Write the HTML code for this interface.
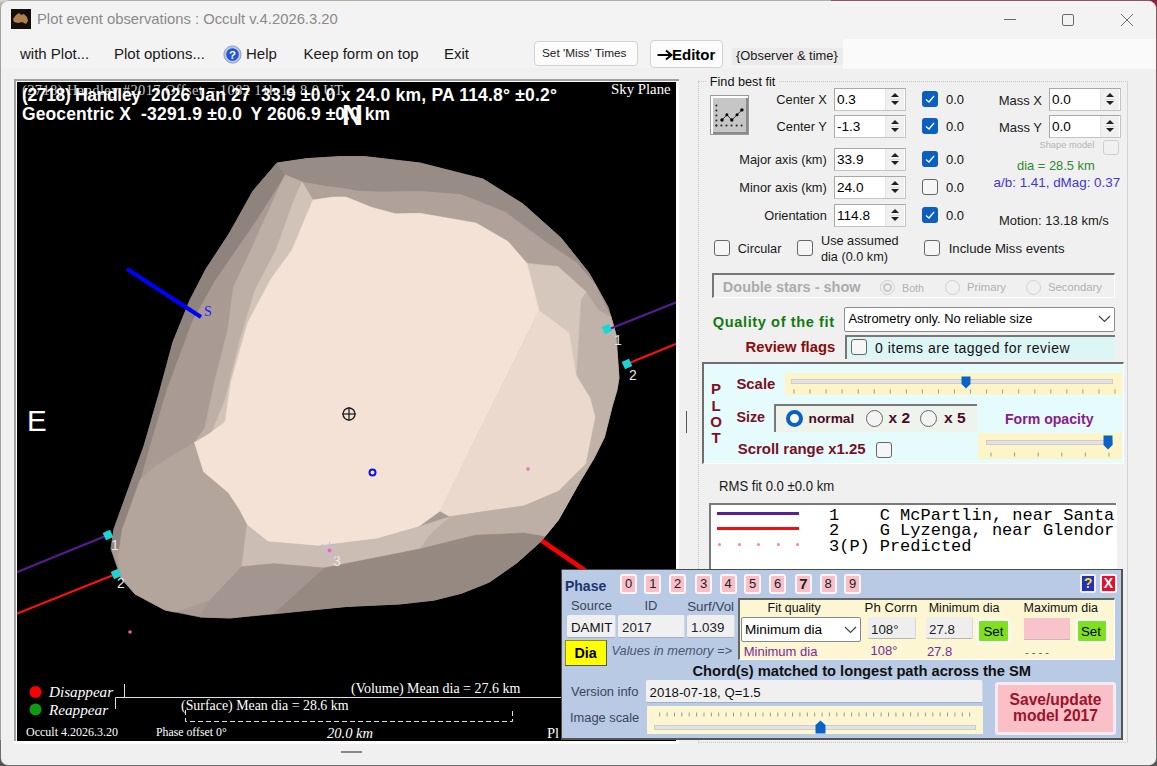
<!DOCTYPE html><html><head><meta charset="utf-8"><style>
*{box-sizing:border-box;margin:0;padding:0}
html,body{width:1157px;height:766px;overflow:hidden;background:#bcb6b0;font-family:"Liberation Sans",sans-serif;}
.a{position:absolute;white-space:nowrap;line-height:1}
#win{position:absolute;left:1px;top:1px;width:1155px;height:764px;background:#f0f0f0;border-radius:8px 8px 7px 7px;overflow:hidden;box-shadow:0 0 0 0.5px #888}
.inp{position:absolute;background:#fff;border:1px solid #c4c4c4;border-top-color:#a8a8a8;border-left-color:#a8a8a8}
.cb{position:absolute;width:16px;height:16px;border:1px solid #666;border-radius:3px;background:#f6f6f6}
.cbon{position:absolute;width:16px;height:16px;border-radius:3px;background:#0b5fc1}
.rad{position:absolute;width:16px;height:16px;border:1px solid #666;border-radius:50%;background:#f4f4f4}
.btn{position:absolute;background:#fcfcfc;border:1px solid #d2d2d2;border-radius:4px}
.pb{position:absolute;top:574px;width:17px;height:20px;background:#f9bfc9;border:2px solid #fdf4f6;border-radius:3px;font-size:13px;line-height:15px;text-align:center;color:#222}
.fld{position:absolute;background:#f0f0f0;border-bottom:1px solid #9fb0c8;border-right:1px solid #d0d8e4;border-radius:2px}
</style></head><body><div style="position:absolute;left:831px;top:0;width:326px;height:766px;background:#8a2444"></div><div style="position:absolute;left:0;top:0;width:831px;height:2px;background:#d8d0c8"></div><div style="position:absolute;left:0;top:740px;width:1157px;height:26px;background:#555"></div><div id="win"><div style="position:absolute;left:-1px;top:-1px;width:1157px;height:766px">
<div class="a" style="left:0;top:0;width:1156px;height:39px;background:#f3f3f3"></div>
<div class="a" style="left:0;top:39px;width:1156px;height:29px;background:#f3f3f3"></div>
<div class="a" style="left:843px;top:39px;width:313px;height:30px;background:#fafafa"></div>
<svg class="a" style="left:11px;top:9px" width="20" height="20"><rect width="20" height="20" fill="#140f0a"/><path d="M2,10 L5,6 L8,4 L10,6 L13,5 L16,8 L17,12 L15,15 L11,13 L7,14 L3,13 Z" fill="#b08050"/></svg>
<div class="a" style="left:37px;top:12.3px;font-size:14.8px;color:#8a8a8a">Plot event observations : Occult v.4.2026.3.20</div>
<div class="a" style="left:1004px;top:19px;width:12px;height:1px;background:#6a6a6a"></div>
<div class="a" style="left:1062px;top:14px;width:12px;height:12px;border:1px solid #6a6a6a;border-radius:2px"></div>
<svg class="a" style="left:1120px;top:13px" width="14" height="14"><path d="M1,1 L13,13 M13,1 L1,13" stroke="#606060" stroke-width="0.9"/></svg>
<div class="a" style="left:20px;top:46.20px;font-size:15px;color:#1a1a1a;font-family:'Liberation Sans',sans-serif;font-weight:normal;font-style:normal;">with Plot...</div>
<div class="a" style="left:114px;top:46.20px;font-size:15px;color:#1a1a1a;font-family:'Liberation Sans',sans-serif;font-weight:normal;font-style:normal;">Plot options...</div>
<svg class="a" style="left:223px;top:45px" width="19" height="19"><circle cx="9.5" cy="9.5" r="8.6" fill="#b8c6e0" stroke="#8a9cc4" stroke-width="1"/><circle cx="9.5" cy="9.5" r="6.3" fill="#1f55d6"/><text x="9.5" y="14" text-anchor="middle" font-family="Liberation Sans" font-weight="bold" font-size="11.5" fill="#fff">?</text></svg>
<div class="a" style="left:246px;top:46.20px;font-size:15px;color:#1a1a1a;font-family:'Liberation Sans',sans-serif;font-weight:normal;font-style:normal;">Help</div>
<div class="a" style="left:303.5px;top:46.20px;font-size:15px;color:#1a1a1a;font-family:'Liberation Sans',sans-serif;font-weight:normal;font-style:normal;">Keep form on top</div>
<div class="a" style="left:444px;top:46.20px;font-size:15px;color:#1a1a1a;font-family:'Liberation Sans',sans-serif;font-weight:normal;font-style:normal;">Exit</div>
<div class="btn" style="left:534px;top:41px;width:104px;height:25px"></div>
<div class="a" style="left:542px;top:48.01px;font-size:11.8px;color:#1a1a1a;font-family:'Liberation Sans',sans-serif;font-weight:normal;font-style:normal;">Set 'Miss' Times</div>
<div class="btn" style="left:650px;top:40px;width:73px;height:28px"></div>
<svg class="a" style="left:657px;top:49px" width="16" height="12"><path d="M0.5,6 H13" stroke="#000" stroke-width="2"/><path d="M9,1.5 L14.5,6 L9,10.5" stroke="#000" stroke-width="2" fill="none"/></svg>
<div class="a" style="left:672px;top:47.10px;font-size:15px;color:#000;font-family:'Liberation Sans',sans-serif;font-weight:bold;font-style:normal;">Editor</div>
<div class="a" style="left:732px;top:48px;width:111px;height:17px;background:#ebebeb"></div>
<div class="a" style="left:736px;top:49.58px;font-size:12.9px;color:#1a1a1a;font-family:'Liberation Sans',sans-serif;font-weight:normal;font-style:normal;">{Observer &amp; time}</div>
<div class="a" style="left:14px;top:79px;width:665px;height:662px;background:#fff;border-top:2px solid #a0a0a0;border-left:2px solid #a0a0a0"></div>
<div class="a" style="left:14px;top:741px;width:665px;height:3px;background:#fff"></div>
<div class="a" style="left:17px;top:82px;width:659px;height:659px;background:#000;overflow:hidden">
<svg width="659" height="659" viewBox="17 82 659 659" style="position:absolute;left:0;top:0" font-family="Liberation Sans">
<polygon points="277,163 307,158.6 341,156.5 364,156.5 420,163 483,179 523,204 561,238 589,273 608,307 616,335 619,378 617,390 612.3,406 604.4,437.4 594,458.3 578.3,484.4 558.3,520 541.7,540.7 516.8,562.9 489.2,582.2 461.5,593.3 433.8,600.2 400,604 347.5,606.4 283,613 230,618 200,617 165,610 135,594 121,578 111,549 114,529 131,482 144,446 159,394 173,342 190,300 206,269 229,234 253,191" fill="#a99b94" stroke="#a99b94" stroke-width="0.6" stroke-linejoin="round"/>
<polygon points="277,163 285,175 253,225 215,280 192,321 167,388 152.5,436 140,480 126,530 118,550 111,549 114,529 131,482 144,446 159,394 173,342 190,300 206,269 229,234 253,191" fill="#8f837d" stroke="#8f837d" stroke-width="0.6" stroke-linejoin="round"/>
<polygon points="277,163 307,158.6 341,156.5 364,156.5 420,163 483,179 523,204 561,238 589,273 608,307 616,335 611,317 595.5,285 577,263 545,241.5 505,212 461,194.5 420,191.3 380,192 357,191 341,188 327,186.5 302,182 285,175" fill="#988c86" stroke="#988c86" stroke-width="0.6" stroke-linejoin="round"/>
<polygon points="285,175 302,182 327,186.5 341,188 357,191 380,192 420,191.3 461,194.5 505,212 545,241.5 577,263 595.5,285 611,317 598.7,310.5 586,291.7 558,266.6 527,263.4 508,241.5 476,223 420,213.3 395.5,213.8 372,207.5 346,197 333,197 313,200 302,182" fill="#b0a29a" stroke="#b0a29a" stroke-width="0.6" stroke-linejoin="round"/>
<polygon points="285,175 302,182 313,200 292,250 271,279 248,322 231,382 225,422 209,434 194,443 204.8,428 215,380 227.8,330 233.6,287 251,250 262,225" fill="#bdafa6" stroke="#bdafa6" stroke-width="0.6" stroke-linejoin="round"/>
<polygon points="302,182 313,200 292,250 271,279 248,322 231,382 225,422 209,434 194,443 212,432 225,400 240,340 255,290 276,250 294,200" fill="#d2c3b9" stroke="#d2c3b9" stroke-width="0.6" stroke-linejoin="round"/>
<polygon points="611,317 616,335 619,378 617,390 612.3,406 604.4,437.4 594,458.3 578.3,484.4 557,492 585.5,464 595,417 590,398 576,375 580.8,299.8 586,291.7 598.7,310.5" fill="#c0b2a9" stroke="#c0b2a9" stroke-width="0.6" stroke-linejoin="round"/>
<polygon points="527,263.4 558,266.6 586,291.7 580.8,299.8 576,375 569,332.7 539,310.5" fill="#d6c7bd" stroke="#d6c7bd" stroke-width="0.6" stroke-linejoin="round"/>
<polygon points="313,200 333,197 346,197 372,207.5 395.5,213.8 420,213.3 476,223 508,241.5 527,263.4 539,310.5 440,511 418,527 377,538.8 318,546 268,541.7 247,525 238.8,509.4 228,493 203,471.6 194,443 209,434 225,422 231,382 248,322 271,279 292,250" fill="#f5e2d6" stroke="#f5e2d6" stroke-width="0.6" stroke-linejoin="round"/>
<polygon points="539,310.5 569,332.7 576,375 590,398 595,417 585.5,464 557,492 524,506 488.6,511 450,516.7 440,511" fill="#ecd9cd" stroke="#ecd9cd" stroke-width="0.6" stroke-linejoin="round"/>
<polygon points="157,465 194,443 203,472 228,493 238.8,509.4 247,525 241.8,566.7 210,600 175,612 165,610 135,594 121,578 118,560 122,530 140,480" fill="#b3a59c" stroke="#b3a59c" stroke-width="0.6" stroke-linejoin="round"/>
<polygon points="247,525 268,541.7 318,546 377,538.8 418,527 450,516.7 488.6,511 524,506 557,492 578.3,484.4 558.3,520 544.5,536.6 523.7,533.1 475.3,535.2 420,549 324,568 274,563.7 241.8,566.7" fill="#cbbdb3" stroke="#cbbdb3" stroke-width="0.6" stroke-linejoin="round"/>
<polygon points="450,516.7 488.6,511 524,506 557,492 578.3,484.4 558.3,520 544.5,536.6 523.7,533.1 475.3,535.2 420,549 430,535" fill="#bdafa6" stroke="#bdafa6" stroke-width="0.6" stroke-linejoin="round"/>
<polygon points="324,568 420,549 475.3,535.2 523.7,533.1 544.5,536.6 541.7,540.7 516.8,562.9 489.2,582.2 461.5,593.3 433.8,600.2 400,604 347.5,606.4 274,613" fill="#968981" stroke="#968981" stroke-width="0.6" stroke-linejoin="round"/>
<polygon points="241.8,566.7 274,563.7 324,568 274,613 230,618 200,617 210,600" fill="#a39690" stroke="#a39690" stroke-width="0.6" stroke-linejoin="round"/>
<line x1="127" y1="269" x2="201" y2="317" stroke="#0000ff" stroke-width="4"/>
<text x="204" y="316" font-family="Liberation Serif" font-size="14" fill="#2020ff">S</text>
<line x1="607" y1="330" x2="677" y2="302" stroke="#5a1a9a" stroke-width="2"/>
<line x1="627" y1="364" x2="677" y2="343.5" stroke="#ff1010" stroke-width="2"/>
<line x1="16" y1="572.5" x2="108" y2="535" stroke="#5a1a9a" stroke-width="2"/>
<line x1="16" y1="614" x2="116" y2="574" stroke="#ff1010" stroke-width="2"/>
<line x1="541.7" y1="540.7" x2="600" y2="580.7" stroke="#ff0000" stroke-width="4.5"/>
<rect x="603" y="325" width="8" height="8" fill="#19d5d5" transform="rotate(-25 607 329)"/>
<rect x="623" y="360" width="8" height="8" fill="#19d5d5" transform="rotate(-25 627 364)"/>
<rect x="104" y="531" width="8" height="8" fill="#19d5d5" transform="rotate(-25 108 535)"/>
<rect x="112" y="570" width="8" height="8" fill="#19d5d5" transform="rotate(-25 116 574)"/>
<text x="614" y="345" font-size="14" fill="#e8e8e8">1</text>
<text x="629" y="380" font-size="14" fill="#e8e8e8">2</text>
<text x="111" y="550" font-size="14" fill="#e8e8e8">1</text>
<text x="117" y="588" font-size="14" fill="#e8e8e8">2</text>
<text x="333" y="566" font-size="14" fill="#e8e8e8">3</text>
<circle cx="349" cy="414" r="6" fill="none" stroke="#222" stroke-width="1.4"/><line x1="342" y1="414" x2="356" y2="414" stroke="#222" stroke-width="1.3"/><line x1="349" y1="407" x2="349" y2="421" stroke="#222" stroke-width="1.3"/>
<circle cx="372.5" cy="472.5" r="3" fill="none" stroke="#1010e0" stroke-width="2"/>
<g stroke="#c8b8e8" stroke-width="1"><line x1="322" y1="544" x2="337" y2="557"/><line x1="337" y1="544" x2="322" y2="557"/><line x1="329.5" y1="542" x2="329.5" y2="559"/></g><circle cx="329.5" cy="550.5" r="2" fill="#f060c0"/>
<circle cx="528" cy="469" r="1.8" fill="#f070c0"/><circle cx="130" cy="632" r="1.8" fill="#e060a0"/>
<text x="27" y="431" font-size="29.5" fill="#fff">E</text>
<text x="22" y="95" font-family="Liberation Serif" font-size="14.5" fill="#c4c4c4" textLength="321" lengthAdjust="spacing">(2718) Handley #2017  Offset = 1082   11h 14 8.0 UT</text>
<g font-weight="bold" font-size="17.5" fill="#fff">
<text x="22" y="100.7" textLength="119" lengthAdjust="spacing">(2718) Handley</text><text x="151" y="100.7" textLength="99.6" lengthAdjust="spacing">2026 Jan 27</text><text x="261" y="100.7" textLength="296" lengthAdjust="spacing">33.9 ±0.0 x 24.0 km, PA 114.8° ±0.2°</text>
<text x="22" y="120" textLength="109" lengthAdjust="spacing">Geocentric X</text><text x="141" y="120" textLength="101" lengthAdjust="spacing">-3291.9 ±0.0</text><text x="250.6" y="120" textLength="139.4" lengthAdjust="spacing">Y 2606.9 ±0.0 km</text>
</g>
<text x="342" y="125" font-size="29" font-weight="bold" fill="#fff">N</text>
<text x="611" y="93.7" font-family="Liberation Serif" font-size="14.8" fill="#fff">Sky Plane</text>
<circle cx="35.5" cy="692" r="6" fill="#ff0000"/><circle cx="35.5" cy="709.5" r="6" fill="#109a10"/>
<g font-family="Liberation Serif" fill="#fff">
<text x="49" y="697" font-size="15.2" font-style="italic">Disappear</text>
<text x="49" y="715" font-size="15.2" font-style="italic">Reappear</text>
<text x="26" y="736" font-size="12">Occult 4.2026.3.20</text>
<text x="351" y="693" font-size="14">(Volume) Mean dia = 27.6 km</text>
<text x="181" y="710" font-size="13.9">(Surface) Mean dia = 28.6 km</text>
<text x="156" y="736" font-size="11.8">Phase offset 0°</text>
<text x="327" y="738" font-size="14.5" font-style="italic">20.0 km</text>
<text x="547" y="738" font-size="14.5">Pl</text>
</g>
<g stroke="#e0e0e0" stroke-width="1" fill="none">
<path d="M124.5,684 V697.5 H676"/><path d="M115.5,709 V697.5 H125"/>
<path d="M185.5,710 V721.5 H512.5 V710" stroke-dasharray="5,3"/>
</g>
</svg></div>
<div class="a" style="left:686px;top:411px;width:1px;height:22px;background:#555"></div>
<div class="a" style="left:341px;top:751px;width:21px;height:2px;background:#888"></div>
<div class="a" style="left:698px;top:81px;width:430px;height:662px;border:1px dotted #c8c8c8"></div>
<div class="a" style="left:707px;top:74px;width:72px;height:14px;background:#f0f0f0"></div>
<div class="a" style="left:709.8px;top:75.55px;font-size:12.7px;color:#111;font-family:'Liberation Sans',sans-serif;font-weight:normal;font-style:normal;">Find best fit</div>
<div class="a" style="left:710px;top:95px;width:39px;height:40px;background:#c6c6c6;border:1px solid #9a9a9a;box-shadow:inset 2px 2px 0 #fff,inset -2px -2px 0 #8a8a8a"></div>
<svg class="a" style="left:0;top:0" width="1157" height="766"><g fill="#222"><circle cx="716.4" cy="105.6" r="1"/><circle cx="716.4" cy="110.6" r="1"/><circle cx="716.4" cy="115.6" r="1"/><circle cx="716.4" cy="120.6" r="1"/><circle cx="716.4" cy="125.6" r="1"/><circle cx="716.4" cy="125.6" r="1"/><circle cx="721.4" cy="125.6" r="1"/><circle cx="726.5" cy="125.6" r="1"/><circle cx="731.5" cy="125.6" r="1"/><circle cx="736.6" cy="125.6" r="1"/><circle cx="741.6" cy="125.6" r="1"/></g><path d="M722,120 L726.9,114.8 L731.8,120 L737,114.8 L741.9,109.9" stroke="#333" stroke-width="1" fill="none"/><g fill="#000"><circle cx="722" cy="120" r="1.7"/><circle cx="726.9" cy="114.8" r="1.5"/><circle cx="731.8" cy="120" r="1.7"/><circle cx="737" cy="114.8" r="1.5"/><circle cx="741.9" cy="109.9" r="1.7"/></g></svg>
<div class="inp" style="left:834px;top:88px;width:72px;height:23px"></div>
<div class="a" style="left:885px;top:89px;width:19px;height:21px;background:#f0f0f0;border-left:1px solid #e4e4e4"></div>
<svg class="a" style="left:889.5px;top:91px" width="10" height="17"><path d="M1,6 L5,2 L9,6 Z" fill="#222"/><path d="M1,10 L5,14 L9,10 Z" fill="#222"/><line x1="0" y1="8.5" x2="10" y2="8.5" stroke="#d8d8d8"/></svg>
<div class="a" style="left:837px;top:92.99px;font-size:13.6px;color:#000;font-family:'Liberation Sans',sans-serif;font-weight:normal;font-style:normal;">0.3</div>
<div class="a" style="left:776.315625px;top:93.66px;font-size:12.8px;color:#1a1a1a;font-family:'Liberation Sans',sans-serif;font-weight:normal;font-style:normal;">Center X</div>
<div class="cbon" style="left:922px;top:91px"></div><svg class="a" style="left:922px;top:91px" width="16" height="16"><path d="M4,8.5 L7,11 L12,5" stroke="#fff" stroke-width="1.3" fill="none"/></svg>
<div class="a" style="left:946px;top:93.00px;font-size:13px;color:#111;font-family:'Liberation Sans',sans-serif;font-weight:normal;font-style:normal;">0.0</div>
<div class="inp" style="left:834px;top:115px;width:72px;height:23px"></div>
<div class="a" style="left:885px;top:116px;width:19px;height:21px;background:#f0f0f0;border-left:1px solid #e4e4e4"></div>
<svg class="a" style="left:889.5px;top:118px" width="10" height="17"><path d="M1,6 L5,2 L9,6 Z" fill="#222"/><path d="M1,10 L5,14 L9,10 Z" fill="#222"/><line x1="0" y1="8.5" x2="10" y2="8.5" stroke="#d8d8d8"/></svg>
<div class="a" style="left:837px;top:119.99px;font-size:13.6px;color:#000;font-family:'Liberation Sans',sans-serif;font-weight:normal;font-style:normal;">-1.3</div>
<div class="a" style="left:776.55px;top:120.66px;font-size:12.8px;color:#1a1a1a;font-family:'Liberation Sans',sans-serif;font-weight:normal;font-style:normal;">Center Y</div>
<div class="cbon" style="left:922px;top:118px"></div><svg class="a" style="left:922px;top:118px" width="16" height="16"><path d="M4,8.5 L7,11 L12,5" stroke="#fff" stroke-width="1.3" fill="none"/></svg>
<div class="a" style="left:946px;top:120.00px;font-size:13px;color:#111;font-family:'Liberation Sans',sans-serif;font-weight:normal;font-style:normal;">0.0</div>
<div class="inp" style="left:834px;top:148px;width:72px;height:23px"></div>
<div class="a" style="left:885px;top:149px;width:19px;height:21px;background:#f0f0f0;border-left:1px solid #e4e4e4"></div>
<svg class="a" style="left:889.5px;top:151px" width="10" height="17"><path d="M1,6 L5,2 L9,6 Z" fill="#222"/><path d="M1,10 L5,14 L9,10 Z" fill="#222"/><line x1="0" y1="8.5" x2="10" y2="8.5" stroke="#d8d8d8"/></svg>
<div class="a" style="left:837px;top:152.99px;font-size:13.6px;color:#000;font-family:'Liberation Sans',sans-serif;font-weight:normal;font-style:normal;">33.9</div>
<div class="a" style="left:739.33125px;top:153.66px;font-size:12.8px;color:#1a1a1a;font-family:'Liberation Sans',sans-serif;font-weight:normal;font-style:normal;">Major axis (km)</div>
<div class="cbon" style="left:922px;top:151px"></div><svg class="a" style="left:922px;top:151px" width="16" height="16"><path d="M4,8.5 L7,11 L12,5" stroke="#fff" stroke-width="1.3" fill="none"/></svg>
<div class="a" style="left:946px;top:153.00px;font-size:13px;color:#111;font-family:'Liberation Sans',sans-serif;font-weight:normal;font-style:normal;">0.0</div>
<div class="inp" style="left:834px;top:176px;width:72px;height:23px"></div>
<div class="a" style="left:885px;top:177px;width:19px;height:21px;background:#f0f0f0;border-left:1px solid #e4e4e4"></div>
<svg class="a" style="left:889.5px;top:179px" width="10" height="17"><path d="M1,6 L5,2 L9,6 Z" fill="#222"/><path d="M1,10 L5,14 L9,10 Z" fill="#222"/><line x1="0" y1="8.5" x2="10" y2="8.5" stroke="#d8d8d8"/></svg>
<div class="a" style="left:837px;top:180.99px;font-size:13.6px;color:#000;font-family:'Liberation Sans',sans-serif;font-weight:normal;font-style:normal;">24.0</div>
<div class="a" style="left:739.33125px;top:181.66px;font-size:12.8px;color:#1a1a1a;font-family:'Liberation Sans',sans-serif;font-weight:normal;font-style:normal;">Minor axis (km)</div>
<div class="cb" style="left:922px;top:179px"></div>
<div class="a" style="left:946px;top:181.00px;font-size:13px;color:#111;font-family:'Liberation Sans',sans-serif;font-weight:normal;font-style:normal;">0.0</div>
<div class="inp" style="left:834px;top:204px;width:72px;height:23px"></div>
<div class="a" style="left:885px;top:205px;width:19px;height:21px;background:#f0f0f0;border-left:1px solid #e4e4e4"></div>
<svg class="a" style="left:889.5px;top:207px" width="10" height="17"><path d="M1,6 L5,2 L9,6 Z" fill="#222"/><path d="M1,10 L5,14 L9,10 Z" fill="#222"/><line x1="0" y1="8.5" x2="10" y2="8.5" stroke="#d8d8d8"/></svg>
<div class="a" style="left:837px;top:208.99px;font-size:13.6px;color:#000;font-family:'Liberation Sans',sans-serif;font-weight:normal;font-style:normal;">114.8</div>
<div class="a" style="left:764.221875px;top:209.66px;font-size:12.8px;color:#1a1a1a;font-family:'Liberation Sans',sans-serif;font-weight:normal;font-style:normal;">Orientation</div>
<div class="cbon" style="left:922px;top:207px"></div><svg class="a" style="left:922px;top:207px" width="16" height="16"><path d="M4,8.5 L7,11 L12,5" stroke="#fff" stroke-width="1.3" fill="none"/></svg>
<div class="a" style="left:946px;top:209.00px;font-size:13px;color:#111;font-family:'Liberation Sans',sans-serif;font-weight:normal;font-style:normal;">0.0</div>
<div class="inp" style="left:1049px;top:88px;width:72px;height:23px"></div>
<div class="a" style="left:1100px;top:89px;width:19px;height:21px;background:#f0f0f0;border-left:1px solid #e4e4e4"></div>
<svg class="a" style="left:1104.5px;top:91px" width="10" height="17"><path d="M1,6 L5,2 L9,6 Z" fill="#222"/><path d="M1,10 L5,14 L9,10 Z" fill="#222"/><line x1="0" y1="8.5" x2="10" y2="8.5" stroke="#d8d8d8"/></svg>
<div class="a" style="left:1052px;top:92.99px;font-size:13.6px;color:#000;font-family:'Liberation Sans',sans-serif;font-weight:normal;font-style:normal;">0.0</div>
<div class="inp" style="left:1049px;top:115px;width:72px;height:23px"></div>
<div class="a" style="left:1100px;top:116px;width:19px;height:21px;background:#f0f0f0;border-left:1px solid #e4e4e4"></div>
<svg class="a" style="left:1104.5px;top:118px" width="10" height="17"><path d="M1,6 L5,2 L9,6 Z" fill="#222"/><path d="M1,10 L5,14 L9,10 Z" fill="#222"/><line x1="0" y1="8.5" x2="10" y2="8.5" stroke="#d8d8d8"/></svg>
<div class="a" style="left:1052px;top:119.99px;font-size:13.6px;color:#000;font-family:'Liberation Sans',sans-serif;font-weight:normal;font-style:normal;">0.0</div>
<div class="a" style="left:998.65625px;top:93.50px;font-size:13px;color:#1a1a1a;font-family:'Liberation Sans',sans-serif;font-weight:normal;font-style:normal;">Mass X</div>
<div class="a" style="left:998.890625px;top:120.50px;font-size:13px;color:#1a1a1a;font-family:'Liberation Sans',sans-serif;font-weight:normal;font-style:normal;">Mass Y</div>
<div class="a" style="left:1039.5px;top:141.13px;font-size:9.3px;color:#b4b4b4;font-family:'Liberation Sans',sans-serif;font-weight:normal;font-style:normal;">Shape model</div>
<div class="a" style="left:1103px;top:140px;width:16px;height:15px;border:1px solid #cfcfcf;border-radius:3px"></div>
<div class="a" style="left:1017px;top:159.58px;font-size:12.9px;color:#2d8a2d;font-family:'Liberation Sans',sans-serif;font-weight:normal;font-style:normal;">dia = 28.5 km</div>
<div class="a" style="left:993.6px;top:176.16px;font-size:13.4px;color:#4236d6;font-family:'Liberation Sans',sans-serif;font-weight:normal;font-style:normal;">a/b: 1.41, dMag: 0.37</div>
<div class="a" style="left:999px;top:213.50px;font-size:13px;color:#1a1a1a;font-family:'Liberation Sans',sans-serif;font-weight:normal;font-style:normal;">Motion: 13.18 km/s</div>
<div class="cb" style="left:714px;top:240px"></div>
<div class="a" style="left:737.7px;top:242.75px;font-size:12.7px;color:#1a1a1a;font-family:'Liberation Sans',sans-serif;font-weight:normal;font-style:normal;">Circular</div>
<div class="cb" style="left:797px;top:240px"></div>
<div class="a" style="left:821px;top:234.75px;font-size:12.7px;color:#1a1a1a;font-family:'Liberation Sans',sans-serif;font-weight:normal;font-style:normal;">Use assumed</div>
<div class="a" style="left:821px;top:250.75px;font-size:12.7px;color:#1a1a1a;font-family:'Liberation Sans',sans-serif;font-weight:normal;font-style:normal;">dia (0.0 km)</div>
<div class="cb" style="left:924px;top:240px"></div>
<div class="a" style="left:948.7px;top:242.33px;font-size:13.2px;color:#1a1a1a;font-family:'Liberation Sans',sans-serif;font-weight:normal;font-style:normal;">Include Miss events</div>
<div class="a" style="left:712px;top:273px;width:403px;height:25px;border-top:2px solid #777;border-left:2px solid #777;border-right:1px solid #fff;border-bottom:1px solid #fff"></div>
<div class="a" style="left:722.8px;top:279.73px;font-size:14.5px;color:#ababab;font-family:'Liberation Sans',sans-serif;font-weight:bold;font-style:normal;">Double stars - show</div>
<div class="rad" style="left:880px;top:280px;border-color:#cfcfcf;background:#f0f0f0;width:15px;height:15px"></div>
<div class="a" style="left:902px;top:282.94px;font-size:10.7px;color:#b0b0b0;font-family:'Liberation Sans',sans-serif;font-weight:normal;font-style:normal;">Both</div>
<div class="rad" style="left:945px;top:280px;border-color:#cfcfcf;background:#f0f0f0;width:15px;height:15px"></div>
<div class="a" style="left:967px;top:282.43px;font-size:11.3px;color:#b0b0b0;font-family:'Liberation Sans',sans-serif;font-weight:normal;font-style:normal;">Primary</div>
<div class="rad" style="left:1026px;top:280px;border-color:#cfcfcf;background:#f0f0f0;width:15px;height:15px"></div>
<div class="a" style="left:1048px;top:282.43px;font-size:11.3px;color:#b0b0b0;font-family:'Liberation Sans',sans-serif;font-weight:normal;font-style:normal;">Secondary</div>
<div class="a" style="left:883px;top:283px;width:9px;height:9px;border-radius:50%;background:#c8c8c8"></div><div class="a" style="left:885px;top:285px;width:5px;height:5px;border-radius:50%;background:#f0f0f0"></div>
<div class="a" style="left:712.8px;top:315.14px;font-size:14.6px;color:#127a12;font-family:'Liberation Sans',sans-serif;font-weight:bold;font-style:normal;letter-spacing:0.6px">Quality of the fit</div>
<div class="a" style="left:844px;top:307px;width:271px;height:25px;background:#fff;border:1px solid #8c8c8c;border-radius:2px"></div>
<div class="a" style="left:848.5px;top:313.38px;font-size:12.9px;color:#000;font-family:'Liberation Sans',sans-serif;font-weight:normal;font-style:normal;">Astrometry only. No reliable size</div>
<svg class="a" style="left:1098px;top:315px" width="13" height="8"><path d="M1,1 L6.5,6.5 L12,1" stroke="#444" stroke-width="1.2" fill="none"/></svg>
<div class="a" style="left:745.54375px;top:339.97px;font-size:14.8px;color:#8a0a0a;font-family:'Liberation Sans',sans-serif;font-weight:bold;font-style:normal;">Review flags</div>
<div class="a" style="left:845px;top:335px;width:270px;height:24px;background:#dcf5f5;border-top:2px solid #777;border-left:2px solid #777"></div>
<div class="cb" style="left:851px;top:339px"></div>
<div class="a" style="left:875px;top:340.65px;font-size:14px;color:#111;font-family:'Liberation Sans',sans-serif;font-weight:normal;font-style:normal;letter-spacing:0.5px">0 items are tagged for review</div>
<div class="a" style="left:702px;top:362px;width:422px;height:102px;background:#e6fbfb;border-top:2px solid #6e6e6e;border-left:2px solid #6e6e6e;border-right:1px solid #fff;border-bottom:1px solid #fff"></div>
<div class="a" style="left:706px;top:381px;width:20px;text-align:center;font-size:15px;font-weight:bold;color:#80102a">P</div>
<div class="a" style="left:706px;top:397.8px;width:20px;text-align:center;font-size:15px;font-weight:bold;color:#80102a">L</div>
<div class="a" style="left:706px;top:414.4px;width:20px;text-align:center;font-size:15px;font-weight:bold;color:#80102a">O</div>
<div class="a" style="left:706px;top:430px;width:20px;text-align:center;font-size:15px;font-weight:bold;color:#80102a">T</div>
<div class="a" style="left:736.4px;top:377.39px;font-size:14.9px;color:#7a0f25;font-family:'Liberation Sans',sans-serif;font-weight:bold;font-style:normal;">Scale</div>
<div class="a" style="left:785px;top:373px;width:337px;height:22px;background:#fdf4c8"></div>
<div class="a" style="left:791px;top:379px;width:322px;height:5px;background:#e2e2e2;border:1px solid #cdcdcd"></div>
<svg class="a" style="left:0;top:0" width="1157" height="766" ><g stroke="#999" stroke-width="1"><line x1="794.0" y1="389.5" x2="794.0" y2="393.5"/><line x1="810.0" y1="389.5" x2="810.0" y2="393.5"/><line x1="826.1" y1="389.5" x2="826.1" y2="393.5"/><line x1="842.1" y1="389.5" x2="842.1" y2="393.5"/><line x1="858.2" y1="389.5" x2="858.2" y2="393.5"/><line x1="874.2" y1="389.5" x2="874.2" y2="393.5"/><line x1="890.3" y1="389.5" x2="890.3" y2="393.5"/><line x1="906.4" y1="389.5" x2="906.4" y2="393.5"/><line x1="922.4" y1="389.5" x2="922.4" y2="393.5"/><line x1="938.5" y1="389.5" x2="938.5" y2="393.5"/><line x1="954.5" y1="389.5" x2="954.5" y2="393.5"/><line x1="970.5" y1="389.5" x2="970.5" y2="393.5"/><line x1="986.6" y1="389.5" x2="986.6" y2="393.5"/><line x1="1002.6" y1="389.5" x2="1002.6" y2="393.5"/><line x1="1018.7" y1="389.5" x2="1018.7" y2="393.5"/><line x1="1034.8" y1="389.5" x2="1034.8" y2="393.5"/><line x1="1050.8" y1="389.5" x2="1050.8" y2="393.5"/><line x1="1066.8" y1="389.5" x2="1066.8" y2="393.5"/><line x1="1082.9" y1="389.5" x2="1082.9" y2="393.5"/><line x1="1099.0" y1="389.5" x2="1099.0" y2="393.5"/><line x1="1115.0" y1="389.5" x2="1115.0" y2="393.5"/></g></svg>
<svg class="a" style="left:961px;top:376px" width="10" height="13"><path d="M0.5,0.5 H9.5 V8 L5,12.5 L0.5,8 Z" fill="#0a64c8"/></svg>
<div class="a" style="left:736.4px;top:409.90px;font-size:14.3px;color:#7a0f25;font-family:'Liberation Sans',sans-serif;font-weight:bold;font-style:normal;">Size</div>
<div class="a" style="left:774px;top:404px;width:203px;height:28px;background:#eef3ec;border-top:2px solid #777;border-left:2px solid #777"></div>
<div class="a" style="left:786px;top:410px;width:17px;height:17px;border-radius:50%;border:4.5px solid #0a62c2;background:#fff"></div>
<div class="a" style="left:808.6px;top:411.90px;font-size:13.7px;color:#4a0a28;font-family:'Liberation Sans',sans-serif;font-weight:bold;font-style:normal;">normal</div>
<div class="rad" style="left:866px;top:410px;width:17px;height:17px"></div>
<div class="a" style="left:888.5px;top:410.38px;font-size:15.5px;color:#4a0a28;font-family:'Liberation Sans',sans-serif;font-weight:bold;font-style:normal;">x 2</div>
<div class="rad" style="left:920px;top:410px;width:17px;height:17px"></div>
<div class="a" style="left:944px;top:410.38px;font-size:15.5px;color:#4a0a28;font-family:'Liberation Sans',sans-serif;font-weight:bold;font-style:normal;">x 5</div>
<div class="a" style="left:1005px;top:412.06px;font-size:14.1px;color:#8a1a8a;font-family:'Liberation Sans',sans-serif;font-weight:bold;font-style:normal;">Form opacity</div>
<div class="a" style="left:978px;top:433px;width:144px;height:26px;background:#fdf4c8"></div>
<div class="a" style="left:986px;top:440px;width:127px;height:5px;background:#e2e2e2;border:1px solid #cdcdcd"></div>
<svg class="a" style="left:0;top:0" width="1157" height="766"><g stroke="#999"><line x1="991.0" y1="452.5" x2="991.0" y2="456.5"/><line x1="1014.6" y1="452.5" x2="1014.6" y2="456.5"/><line x1="1038.2" y1="452.5" x2="1038.2" y2="456.5"/><line x1="1061.8" y1="452.5" x2="1061.8" y2="456.5"/><line x1="1085.4" y1="452.5" x2="1085.4" y2="456.5"/><line x1="1109.0" y1="452.5" x2="1109.0" y2="456.5"/></g></svg>
<svg class="a" style="left:1103px;top:435px" width="10" height="15"><path d="M0.5,0.5 H9.5 V10 L5,14.5 L0.5,10 Z" fill="#0a64c8"/></svg>
<div class="a" style="left:737.7px;top:442.34px;font-size:14.95px;color:#7a0f25;font-family:'Liberation Sans',sans-serif;font-weight:bold;font-style:normal;">Scroll range x1.25</div>
<div class="cb" style="left:876px;top:442px"></div>
<div class="a" style="left:718.5px;top:479.23px;font-size:14.5px;color:#1a1a1a;font-family:'Liberation Sans',sans-serif;font-weight:normal;font-style:normal;transform:scaleX(0.905);transform-origin:left">RMS fit 0.0 ±0.0 km</div>
<div class="a" style="left:709px;top:503px;width:408px;height:80px;background:#fff;border-top:2px solid #7a7a7a;border-left:2px solid #7a7a7a"></div>
<div class="a" style="left:717px;top:512px;width:82px;height:3px;background:#5a1e96"></div>
<div class="a" style="left:717px;top:527px;width:82px;height:3px;background:#ee1010"></div>
<div class="a" style="left:718.0px;top:542.5px;width:3px;height:3px;border-radius:50%;background:#f080c8"></div>
<div class="a" style="left:737.5px;top:542.5px;width:3px;height:3px;border-radius:50%;background:#f080c8"></div>
<div class="a" style="left:757.0px;top:542.5px;width:3px;height:3px;border-radius:50%;background:#f080c8"></div>
<div class="a" style="left:776.5px;top:542.5px;width:3px;height:3px;border-radius:50%;background:#f080c8"></div>
<div class="a" style="left:796.0px;top:542.5px;width:3px;height:3px;border-radius:50%;background:#f080c8"></div>
<div class="a" style="left:829px;top:507.37px;font-size:17px;color:#000;font-family:'Liberation Mono',monospace;font-weight:normal;font-style:normal;">1</div>
<div class="a" style="left:879.7px;top:507.37px;font-size:17px;color:#000;font-family:'Liberation Mono',monospace;font-weight:normal;font-style:normal;">C McPartlin, near Santa</div>
<div class="a" style="left:829px;top:522.47px;font-size:17px;color:#000;font-family:'Liberation Mono',monospace;font-weight:normal;font-style:normal;">2</div>
<div class="a" style="left:879.7px;top:522.47px;font-size:17px;color:#000;font-family:'Liberation Mono',monospace;font-weight:normal;font-style:normal;">G Lyzenga, near Glendor</div>
<div class="a" style="left:829px;top:537.57px;font-size:17px;color:#000;font-family:'Liberation Mono',monospace;font-weight:normal;font-style:normal;">3(P)</div>
<div class="a" style="left:879.7px;top:537.57px;font-size:17px;color:#000;font-family:'Liberation Mono',monospace;font-weight:normal;font-style:normal;">Predicted</div>
<div class="a" style="left:1116px;top:503px;width:1px;height:70px;background:#fff"></div>
<div class="a" style="left:1127px;top:81px;width:1px;height:662px;background:#d4d4d4"></div>
<div class="a" style="left:561px;top:569px;width:562px;height:171px;background:#b8cae4;border:1px solid #4a4a4a;border-right:2px solid #555;border-bottom:2px solid #555"></div>
<div class="a" style="left:564.9px;top:579.11px;font-size:14.05px;color:#1c3570;font-family:'Liberation Sans',sans-serif;font-weight:bold;font-style:normal;">Phase</div>
<div class="pb" style="left:620.0px;font-weight:normal;font-size:13px">0</div>
<div class="pb" style="left:644.4px;font-weight:normal;font-size:13px">1</div>
<div class="pb" style="left:669.0px;font-weight:normal;font-size:13px">2</div>
<div class="pb" style="left:695.0px;font-weight:normal;font-size:13px">3</div>
<div class="pb" style="left:719.6px;font-weight:normal;font-size:13px">4</div>
<div class="pb" style="left:744.0px;font-weight:normal;font-size:13px">5</div>
<div class="pb" style="left:769.0px;font-weight:normal;font-size:13px">6</div>
<div class="pb" style="left:794.8px;font-weight:bold;font-size:15px">7</div>
<div class="pb" style="left:819.5px;font-weight:normal;font-size:13px">8</div>
<div class="pb" style="left:844.0px;font-weight:normal;font-size:13px">9</div>
<div class="a" style="left:1080px;top:574px;width:16px;height:19px;background:#2030c0;border:2px solid #eef;border-radius:2px;color:#ffe000;font-weight:bold;font-size:14px;line-height:15px;text-align:center">?</div>
<div class="a" style="left:1100px;top:574px;width:17px;height:19px;background:#e01030;border:2px solid #fee;border-radius:2px;color:#fff;font-weight:bold;font-size:14px;line-height:15px;text-align:center">X</div>
<div class="a" style="left:571px;top:600.08px;font-size:12.9px;color:#3a4658;font-family:'Liberation Sans',sans-serif;font-weight:normal;font-style:normal;">Source</div>
<div class="a" style="left:644.4px;top:600.08px;font-size:12.9px;color:#3a4658;font-family:'Liberation Sans',sans-serif;font-weight:normal;font-style:normal;">ID</div>
<div class="a" style="left:687.2px;top:599.66px;font-size:13.4px;color:#3a4658;font-family:'Liberation Sans',sans-serif;font-weight:normal;font-style:normal;">Surf/Vol</div>
<div class="fld" style="left:567px;top:615px;width:49px;height:23px"></div>
<div class="fld" style="left:618px;top:615px;width:67px;height:23px"></div>
<div class="fld" style="left:687px;top:615px;width:48px;height:23px"></div>
<div class="a" style="left:571px;top:620.74px;font-size:13.3px;color:#111;font-family:'Liberation Sans',sans-serif;font-weight:normal;font-style:normal;">DAMIT</div>
<div class="a" style="left:622px;top:620.74px;font-size:13.3px;color:#222;font-family:'Liberation Sans',sans-serif;font-weight:normal;font-style:normal;">2017</div>
<div class="a" style="left:691px;top:620.74px;font-size:13.3px;color:#222;font-family:'Liberation Sans',sans-serif;font-weight:normal;font-style:normal;">1.039</div>
<div class="a" style="left:565px;top:640px;width:42px;height:26px;background:#ffff00;border:1px solid #909000;border-right-color:#555;border-bottom-color:#555"></div>
<div class="a" style="left:574.4px;top:645.90px;font-size:14.3px;color:#000;font-family:'Liberation Sans',sans-serif;font-weight:bold;font-style:normal;">Dia</div>
<div class="a" style="left:611.5px;top:644.66px;font-size:12.8px;color:#4a5670;font-family:'Liberation Sans',sans-serif;font-weight:normal;font-style:italic;">Values in memory =&gt;</div>
<div class="a" style="left:738px;top:598px;width:377px;height:62px;background:#fdf6d2;border-top:2px solid #666;border-left:2px solid #666;border-right:1px solid #fff;border-bottom:1px solid #fff"></div>
<div class="a" style="left:767.6px;top:602.00px;font-size:12.4px;color:#111;font-family:'Liberation Sans',sans-serif;font-weight:normal;font-style:normal;">Fit quality</div>
<div class="a" style="left:864.6px;top:601.33px;font-size:13.2px;color:#111;font-family:'Liberation Sans',sans-serif;font-weight:normal;font-style:normal;">Ph Corrn</div>
<div class="a" style="left:928.7px;top:601.92px;font-size:12.5px;color:#111;font-family:'Liberation Sans',sans-serif;font-weight:normal;font-style:normal;">Minimum dia</div>
<div class="a" style="left:1023.6px;top:601.92px;font-size:12.5px;color:#111;font-family:'Liberation Sans',sans-serif;font-weight:normal;font-style:normal;">Maximum dia</div>
<div class="a" style="left:741px;top:617px;width:120px;height:25px;background:#fff;border:1px solid #888;border-radius:2px"></div>
<div class="a" style="left:745px;top:622.99px;font-size:13.6px;color:#000;font-family:'Liberation Sans',sans-serif;font-weight:normal;font-style:normal;">Minimum dia</div>
<svg class="a" style="left:844px;top:626px" width="13" height="8"><path d="M1,1 L6.5,6.5 L12,1" stroke="#444" stroke-width="1.2" fill="none"/></svg>
<div class="fld" style="left:868px;top:617px;width:48px;height:22px;background:#eeeeee;border-bottom-color:#b8b8b0"></div>
<div class="a" style="left:871px;top:622.74px;font-size:13.3px;color:#222;font-family:'Liberation Sans',sans-serif;font-weight:normal;font-style:normal;">108°</div>
<div class="fld" style="left:926px;top:617px;width:47px;height:22px;background:#eeeeee;border-bottom-color:#b8b8b0"></div>
<div class="a" style="left:929px;top:622.74px;font-size:13.3px;color:#222;font-family:'Liberation Sans',sans-serif;font-weight:normal;font-style:normal;">27.8</div>
<div class="a" style="left:976px;top:618px;width:35px;height:26px;background:#7ee020;border:3px solid #f8f8f0;border-radius:4px"></div>
<div class="a" style="left:983.4px;top:624.74px;font-size:13.3px;color:#000;font-family:'Liberation Sans',sans-serif;font-weight:normal;font-style:normal;">Set</div>
<div class="a" style="left:1024px;top:618px;width:46px;height:22px;background:#f9c3cb;border-bottom:1px solid #c8b8b8"></div>
<div class="a" style="left:1075px;top:618px;width:34px;height:26px;background:#7ee020;border:3px solid #f8f8f0;border-radius:4px"></div>
<div class="a" style="left:1081px;top:624.74px;font-size:13.3px;color:#000;font-family:'Liberation Sans',sans-serif;font-weight:normal;font-style:normal;">Set</div>
<div class="a" style="left:743.7px;top:644.50px;font-size:13px;color:#7a2a9a;font-family:'Liberation Sans',sans-serif;font-weight:normal;font-style:normal;">Minimum dia</div>
<div class="a" style="left:870.6px;top:644.00px;font-size:13px;color:#7a2a9a;font-family:'Liberation Sans',sans-serif;font-weight:normal;font-style:normal;">108°</div>
<div class="a" style="left:926.9px;top:645.00px;font-size:13px;color:#7a2a9a;font-family:'Liberation Sans',sans-serif;font-weight:normal;font-style:normal;">27.8</div>
<div class="a" style="left:1025px;top:646.69px;font-size:11px;color:#555;font-family:'Liberation Sans',sans-serif;font-weight:normal;font-style:normal;">- - - -</div>
<div class="a" style="left:692.4px;top:664.06px;font-size:14.7px;color:#111;font-family:'Liberation Sans',sans-serif;font-weight:bold;font-style:normal;">Chord(s) matched to longest path across the SM</div>
<div class="a" style="left:571px;top:685.58px;font-size:12.9px;color:#3a4658;font-family:'Liberation Sans',sans-serif;font-weight:normal;font-style:normal;">Version info</div>
<div class="fld" style="left:646px;top:680px;width:337px;height:23px;background:#f0f0f0"></div>
<div class="a" style="left:649.6px;top:686.33px;font-size:13.2px;color:#111;font-family:'Liberation Sans',sans-serif;font-weight:normal;font-style:normal;">2018-07-18, Q=1.5</div>
<div class="a" style="left:570px;top:712.12px;font-size:12.85px;color:#3a4658;font-family:'Liberation Sans',sans-serif;font-weight:normal;font-style:normal;">Image scale</div>
<div class="a" style="left:647px;top:706px;width:336px;height:28px;background:#fdf6d2"></div>
<svg class="a" style="left:0;top:0" width="1157" height="766"><g stroke="#999"><line x1="659.7" y1="712.5" x2="659.7" y2="716.5"/><line x1="667.1" y1="712.5" x2="667.1" y2="716.5"/><line x1="674.5" y1="712.5" x2="674.5" y2="716.5"/><line x1="681.8" y1="712.5" x2="681.8" y2="716.5"/><line x1="689.2" y1="712.5" x2="689.2" y2="716.5"/><line x1="696.6" y1="712.5" x2="696.6" y2="716.5"/><line x1="704.0" y1="712.5" x2="704.0" y2="716.5"/><line x1="711.4" y1="712.5" x2="711.4" y2="716.5"/><line x1="718.7" y1="712.5" x2="718.7" y2="716.5"/><line x1="726.1" y1="712.5" x2="726.1" y2="716.5"/><line x1="733.5" y1="712.5" x2="733.5" y2="716.5"/><line x1="740.9" y1="712.5" x2="740.9" y2="716.5"/><line x1="748.3" y1="712.5" x2="748.3" y2="716.5"/><line x1="755.6" y1="712.5" x2="755.6" y2="716.5"/><line x1="763.0" y1="712.5" x2="763.0" y2="716.5"/><line x1="770.4" y1="712.5" x2="770.4" y2="716.5"/><line x1="777.8" y1="712.5" x2="777.8" y2="716.5"/><line x1="785.2" y1="712.5" x2="785.2" y2="716.5"/><line x1="792.5" y1="712.5" x2="792.5" y2="716.5"/><line x1="799.9" y1="712.5" x2="799.9" y2="716.5"/><line x1="807.3" y1="712.5" x2="807.3" y2="716.5"/><line x1="814.7" y1="712.5" x2="814.7" y2="716.5"/><line x1="822.1" y1="712.5" x2="822.1" y2="716.5"/><line x1="829.4" y1="712.5" x2="829.4" y2="716.5"/><line x1="836.8" y1="712.5" x2="836.8" y2="716.5"/><line x1="844.2" y1="712.5" x2="844.2" y2="716.5"/><line x1="851.6" y1="712.5" x2="851.6" y2="716.5"/><line x1="859.0" y1="712.5" x2="859.0" y2="716.5"/><line x1="866.3" y1="712.5" x2="866.3" y2="716.5"/><line x1="873.7" y1="712.5" x2="873.7" y2="716.5"/><line x1="881.1" y1="712.5" x2="881.1" y2="716.5"/><line x1="888.5" y1="712.5" x2="888.5" y2="716.5"/><line x1="895.9" y1="712.5" x2="895.9" y2="716.5"/><line x1="903.2" y1="712.5" x2="903.2" y2="716.5"/><line x1="910.6" y1="712.5" x2="910.6" y2="716.5"/><line x1="918.0" y1="712.5" x2="918.0" y2="716.5"/><line x1="925.4" y1="712.5" x2="925.4" y2="716.5"/><line x1="932.8" y1="712.5" x2="932.8" y2="716.5"/><line x1="940.1" y1="712.5" x2="940.1" y2="716.5"/><line x1="947.5" y1="712.5" x2="947.5" y2="716.5"/><line x1="954.9" y1="712.5" x2="954.9" y2="716.5"/><line x1="962.3" y1="712.5" x2="962.3" y2="716.5"/><line x1="969.7" y1="712.5" x2="969.7" y2="716.5"/></g></svg>
<div class="a" style="left:654px;top:725px;width:322px;height:5px;background:#e2e2e2;border:1px solid #cdcdcd"></div>
<svg class="a" style="left:815px;top:720px" width="11" height="14"><path d="M0.5,13.5 V5 L5.5,0.5 L10.5,5 V13.5 Z" fill="#0a64c8"/></svg>
<div class="a" style="left:995px;top:682px;width:121px;height:53px;background:#f9c0c8;border:3px solid #f4eaf0;border-radius:3px"></div>
<div class="a" style="left:995px;top:692px;width:121px;text-align:center;font-size:15.6px;font-weight:bold;color:#a01028;line-height:16px">Save/update<br>model 2017</div>
</div></div></body></html>
